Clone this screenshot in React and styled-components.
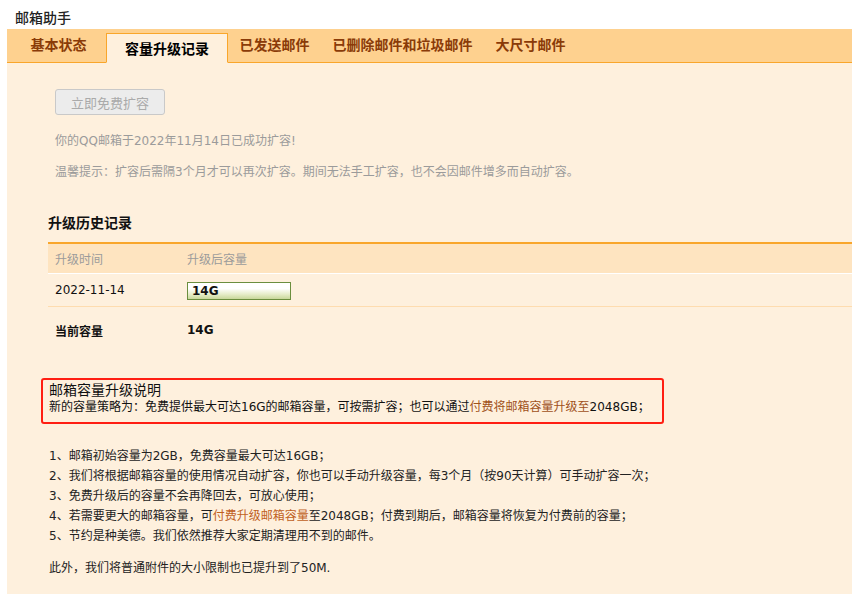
import React from "react";
import styled, { createGlobalStyle } from "styled-components";

const Global = createGlobalStyle`
  html, body { margin: 0; padding: 0; background: #fff; }
  body {
    font-family: "DejaVu Sans", "Noto Sans CJK SC", sans-serif;
    font-size: 12px;
    color: #333;
  }
`;

const Page = styled.div`
  width: 852px;
  height: 594px;
  overflow: hidden;
  padding-left: 7px;
  box-sizing: border-box;
`;

const Title = styled.div`
  height: 29px;
  line-height: 34px;
  padding-left: 8px;
  font-size: 14px;
  color: #222;
  font-family: "Noto Sans CJK SC", sans-serif;
  font-weight: 500;
`;

const TabBar = styled.div`
  display: flex;
  align-items: flex-end;
  height: 33px;
  background: #fed18f;
  border-bottom: 1px solid #f9a62b;
  padding-left: 12px;
`;

const Tab = styled.div`
  height: ${(p) => (p.$active ? "28px" : "35px")};
  line-height: ${(p) => (p.$active ? "29px" : "35px")};
  padding: ${(p) => (p.$active ? "0 18px" : "0 11.5px")};
  margin-left: ${(p) => (p.$active ? "8px" : "0")};
  margin-bottom: ${(p) => (p.$active ? "-1px" : "0")};
  background: ${(p) => (p.$active ? "#fef0dd" : "transparent")};
  border: ${(p) => (p.$active ? "1px solid #f9a62b" : "none")};
  border-bottom: ${(p) => (p.$active ? "1px solid #fef0dd" : "none")};
  color: ${(p) => (p.$active ? "#000" : "#8a3b08")};
  font-size: 14px;
  font-weight: 700;
  font-family: "Noto Sans CJK SC", sans-serif;
  white-space: nowrap;
`;

const Content = styled.div`
  background: #fef0dd;
  padding: 26px 0 40px 34px;
  min-height: 600px;
`;

const Section = styled.div`
  padding-left: ${(p) => p.$indent || 0}px;
`;

const Button = styled.button`
  display: block;
  width: 110px;
  height: 26px;
  background: #ececec;
  border: 1px solid #c9c9c9;
  border-radius: 3px;
  color: #aaa;
  font-size: 13px;
  font-family: "Noto Sans CJK SC", sans-serif;
  padding: 0;
  margin: 0 0 16px;
`;

const Note = styled.p`
  margin: 0 0 11px;
  line-height: 20px;
  font-size: 12px;
  color: #9b9b9b;
`;

const Heading = styled.h3`
  margin: 30px 0 10px;
  font-size: 14px;
  line-height: 20px;
  font-weight: 700;
  color: #111;
  font-family: "Noto Sans CJK SC", sans-serif;
`;

const Table = styled.div`
  border-top: 2px solid #f9a62b;
`;

const Row = styled.div`
  display: grid;
  grid-template-columns: 132px 1fr;
  align-items: center;
  height: ${(p) => p.$h}px;
  padding-left: 7px;
  background: ${(p) => p.$bg || "transparent"};
  border-bottom: ${(p) => p.$border || "none"};
  color: ${(p) => p.$color || "#111"};
  font-weight: ${(p) => (p.$bold ? 700 : 400)};
  font-size: 12px;
`;

const Bar = styled.div`
  width: 98px;
  height: 16px;
  border: 1px solid #6b8e3e;
  background: linear-gradient(to bottom, #fff 35%, #e6edc9 70%, #c8d79a);
  font-weight: 700;
  line-height: 16px;
  padding-left: 4px;
  box-sizing: content-box;
  margin-top: 2px;
`;

const RedBox = styled.div`
  margin-top: 25px;
  width: 607px;
  border: 2px solid #ff1e12;
  border-radius: 3px;
  padding: 0 6px 6px;
`;

const BoxTitle = styled.div`
  font-size: 14px;
  line-height: 18px;
  color: #111;
  font-family: "Noto Sans CJK SC", sans-serif;
`;

const BoxText = styled.div`
  font-size: 12px;
  line-height: 18px;
  color: #111;
`;

const Brown = styled.span`
  color: ${(p) => p.$c || "#a0501a"};
`;

const List = styled.ol`
  list-style: none;
  margin: 22px 0 12px;
  padding: 0 0 0 8px;
`;

const Item = styled.li`
  line-height: 20px;
  font-size: 12px;
  color: #222;
`;

const Footer = styled.p`
  margin: 0;
  padding-left: 8px;
  line-height: 20px;
  font-size: 12px;
  color: #222;
`;

export default function App() {
  return (
    <Page>
      <Global />
      <Title>邮箱助手</Title>
      <TabBar>
        <Tab>基本状态</Tab>
        <Tab $active>容量升级记录</Tab>
        <Tab>已发送邮件</Tab>
        <Tab>已删除邮件和垃圾邮件</Tab>
        <Tab>大尺寸邮件</Tab>
      </TabBar>
      <Content>
        <Section $indent={14}>
          <Button>立即免费扩容</Button>
          <Note>你的QQ邮箱于2022年11月14日已成功扩容!</Note>
          <Note>温馨提示：扩容后需隔3个月才可以再次扩容。期间无法手工扩容，也不会因邮件增多而自动扩容。</Note>
        </Section>
        <Section $indent={7}>
          <Heading>升级历史记录</Heading>
          <Table>
            <Row $h={29} $bg="#fee4c0" $border="1px solid #fff" $color="#9b9b9b">
              <span>升级时间</span>
              <span>升级后容量</span>
            </Row>
            <Row $h={32} $border="1px solid #fedcaf">
              <span>2022-11-14</span>
              <Bar>14G</Bar>
            </Row>
            <Row $h={46} $bold>
              <span>当前容量</span>
              <span>14G</span>
            </Row>
          </Table>
        </Section>
        <RedBox>
          <BoxTitle>邮箱容量升级说明</BoxTitle>
          <BoxText>
            新的容量策略为：免费提供最大可达16G的邮箱容量，可按需扩容；也可以通过
            <Brown>付费将邮箱容量升级至</Brown>2048GB；
          </BoxText>
        </RedBox>
        <List>
          <Item>1、邮箱初始容量为2GB，免费容量最大可达16GB；</Item>
          <Item>2、我们将根据邮箱容量的使用情况自动扩容，你也可以手动升级容量，每3个月（按90天计算）可手动扩容一次；</Item>
          <Item>3、免费升级后的容量不会再降回去，可放心使用；</Item>
          <Item>
            4、若需要更大的邮箱容量，可<Brown $c="#c0601e">付费升级邮箱容量</Brown>至2048GB；付费到期后，邮箱容量将恢复为付费前的容量；
          </Item>
          <Item>5、节约是种美德。我们依然推荐大家定期清理用不到的邮件。</Item>
        </List>
        <Footer>此外，我们将普通附件的大小限制也已提升到了50M.</Footer>
      </Content>
    </Page>
  );
}
